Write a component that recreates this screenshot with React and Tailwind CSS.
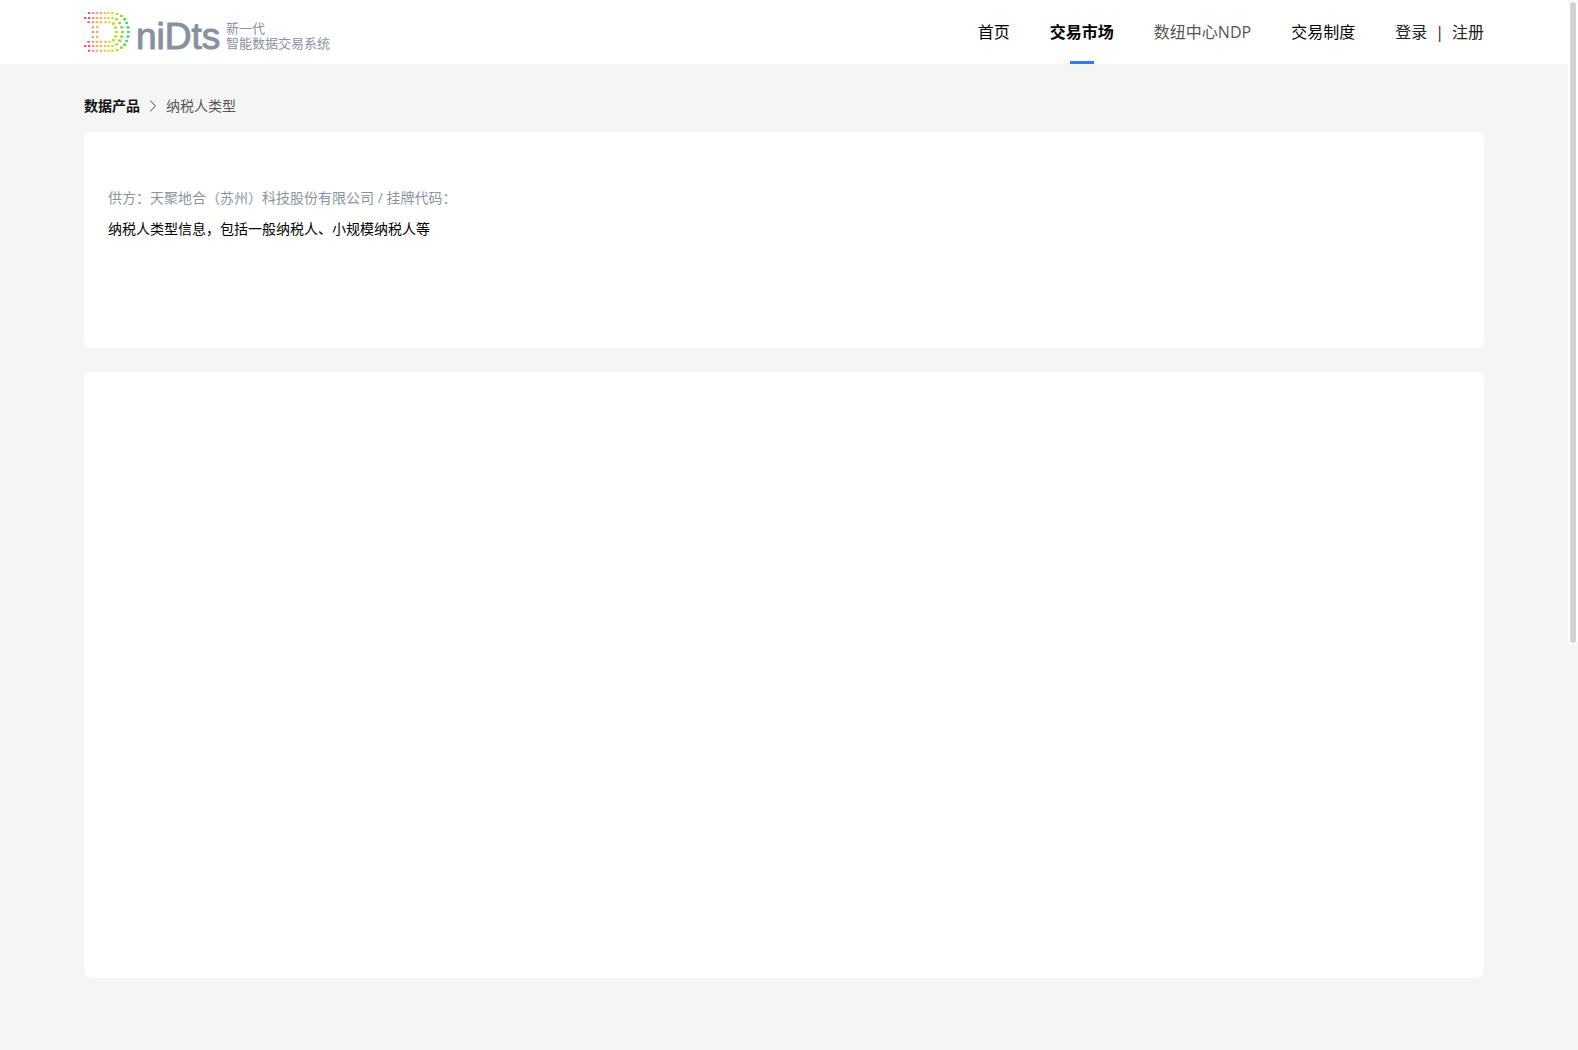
import React from "react";
import { ChevronRight } from "lucide-react";
import clsx from "clsx";

const NAV_ITEMS = [
  { key: "home", label: "首页", tone: "text-black" },
  { key: "market", label: "交易市场", tone: "text-black", active: true },
  { key: "ndp", label: "数纽中心NDP", tone: "text-[#555555]" },
  { key: "rules", label: "交易制度", tone: "text-black" },
];

const STRAIGHT_DOTS = [
  ...[15, 128].flatMap((y) => [27, 39, 50, 62, 74, 85, 97].map((x) => [x, y])),
  ...[30, 114].flatMap((y) => [15, 27, 39, 50, 62, 74, 85, 97].map((x) => [x, y])),
  ...[43, 101].flatMap((y) => [25, 38, 50, 62, 76, 88].map((x) => [x, y])),
  ...[58, 72, 86].flatMap((y) => [38, 51].map((x) => [x, y])),
];

const CURVE_DOTS = [
  // outer ring
  [111, 18], [124, 24], [134, 34], [140, 45], [144, 58], [145, 72], [144, 86], [140, 99], [134, 110], [124, 119], [111, 126],
  // middle ring
  [110, 34], [119, 45], [125, 58], [127, 72], [125, 86], [119, 98], [110, 109],
  // inner ring
  [100, 47], [107, 59], [110, 72], [107, 85], [100, 97],
];

const DOT_COLORS = ["#fb4a6a", "#fd8a5e", "#fba35a", "#f0c22c", "#e2d81f", "#bfd92a", "#8fd63a", "#45dc6c"];

function dotColor(x) {
  const step = Math.floor((x - 12) / 17);
  return DOT_COLORS[Math.min(step, DOT_COLORS.length - 1)];
}

function LogoMark() {
  return (
    <svg width="46" height="42" viewBox="12 9 138 126" aria-hidden="true">
      {STRAIGHT_DOTS.map(([x, y]) => (
        <rect key={`${x}-${y}`} x={x - 3} y={y - 3} width="7" height="6" rx="1" fill={dotColor(x)} />
      ))}
      {CURVE_DOTS.map(([x, y]) => (
        <ellipse key={`${x}-${y}`} cx={x} cy={y} rx="5" ry="4" fill={dotColor(x)} />
      ))}
    </svg>
  );
}

function Logo() {
  return (
    <a href="#home" className="flex items-center text-[#87919f]">
      <LogoMark />
      <svg width="92" height="56" viewBox="0 0 92 56" className="ml-1">
        <text
          x="2"
          y="45"
          fill="currentColor"
          stroke="currentColor"
          strokeWidth="1"
          strokeLinejoin="round"
          fontSize="37"
          fontFamily="'Liberation Sans', Arial, sans-serif"
        >
          niDts
        </text>
      </svg>
      <span className="pt-2 text-[13px] leading-[15px]">
        新一代
        <br />
        智能数据交易系统
      </span>
    </a>
  );
}

function Header() {
  return (
    <header className="bg-white">
      <div className="mx-auto flex h-16 w-full max-w-[1400px] items-center justify-between">
        <Logo />
        <div className="flex h-full items-center gap-10 text-base">
          <nav className="flex h-full gap-10">
            {NAV_ITEMS.map((item) => (
              <a
                key={item.key}
                href={`#${item.key}`}
                className={clsx("relative flex h-full items-center", item.tone, item.active && "font-bold")}
              >
                {item.label}
                {item.active && <span className="absolute bottom-0 left-1/2 h-[3px] w-6 -translate-x-1/2 bg-[#2f7df0]" />}
              </a>
            ))}
          </nav>
          <div className="flex items-center gap-2 text-[#222222]">
            <a href="#login">登录</a>
            <span>|</span>
            <a href="#register">注册</a>
          </div>
        </div>
      </div>
    </header>
  );
}

function Breadcrumb() {
  return (
    <nav className="flex items-center pt-8 pb-4 text-sm" aria-label="breadcrumb">
      <a href="#products" className="font-bold text-[#111111]">数据产品</a>
      <ChevronRight className="mx-[3px] h-5 w-5 text-[#666666]" strokeWidth={1.25} />
      <span className="text-[#555555]">纳税人类型</span>
    </nav>
  );
}

export default function App() {
  return (
    <div className="flex min-h-screen bg-[#f5f5f5] font-['Open_Sans','Noto_Sans_CJK_SC',sans-serif]">
      <div className="min-w-0 flex-1">
        <Header />
        <main className="mx-auto w-full max-w-[1400px]">
          <Breadcrumb />
          <section className="min-h-[216px] rounded-lg bg-white px-6 pt-14">
            <p className="text-sm text-[#8a93a0]">供方：天聚地合（苏州）科技股份有限公司 / 挂牌代码：</p>
            <p className="mt-[11px] text-sm text-black">纳税人类型信息，包括一般纳税人、小规模纳税人等</p>
          </section>
          <section className="mt-6 min-h-[606px] rounded-lg bg-white" />
        </main>
      </div>
      {/* scroll track */}
      <div className="w-[10px] shrink-0">
        <div className="h-[645px] rounded-full border-2 border-white bg-[#d1d1d1]" />
      </div>
    </div>
  );
}
